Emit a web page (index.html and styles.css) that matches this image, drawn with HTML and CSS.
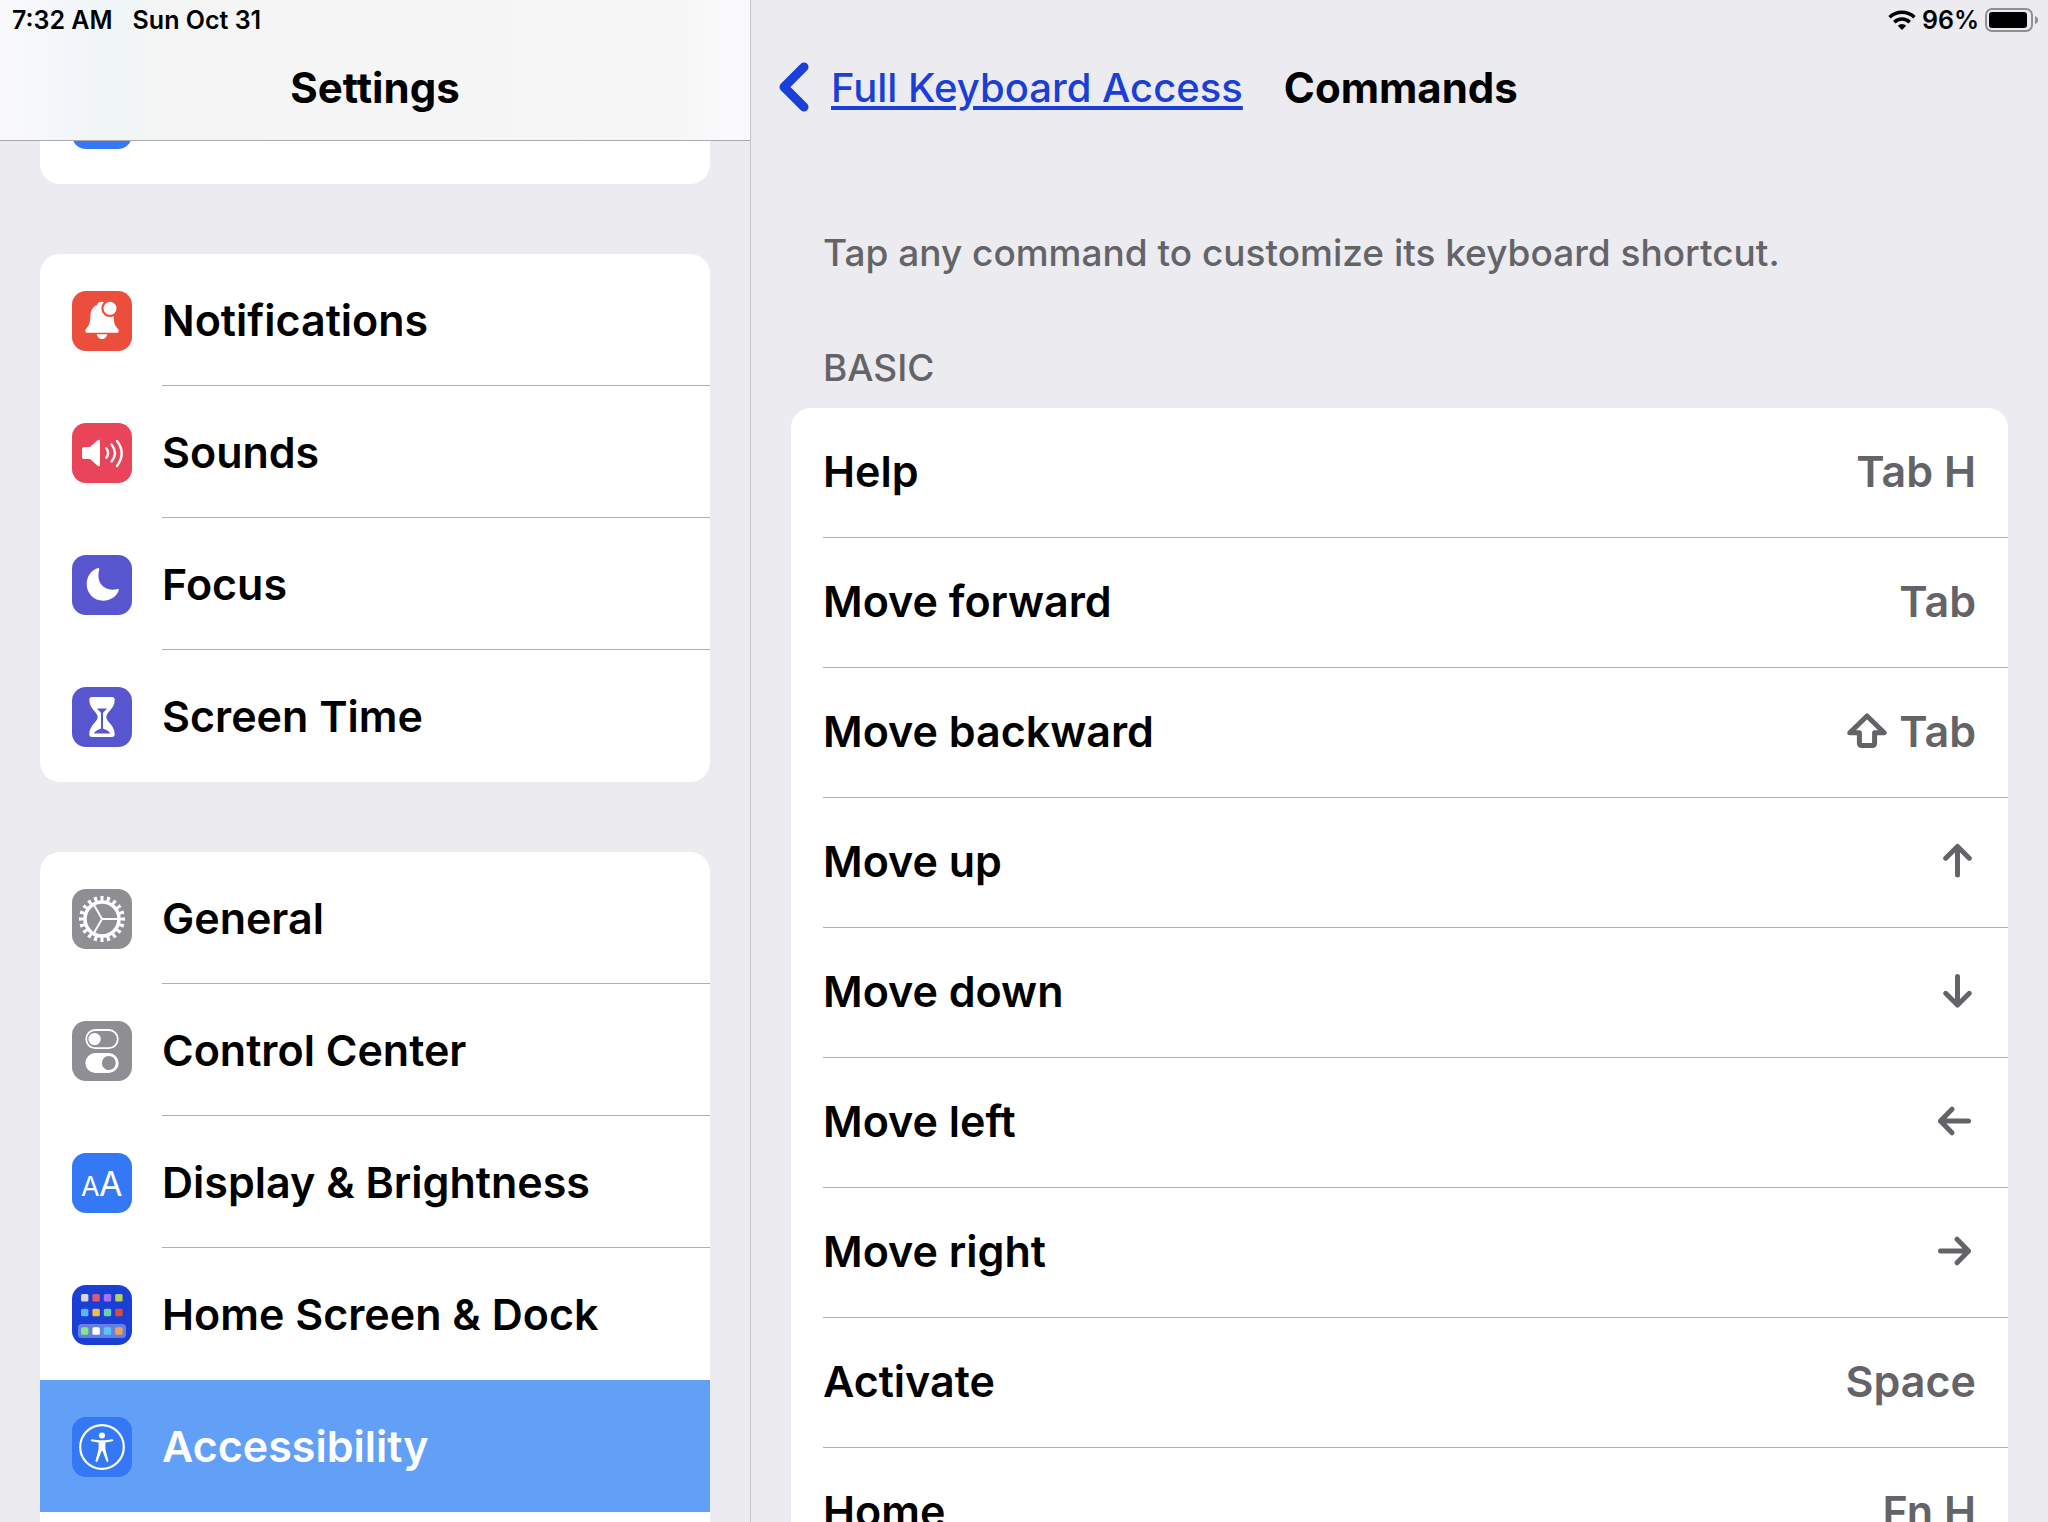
FILE: index.html
```html
<!DOCTYPE html>
<html lang="en">
<head>
  <meta charset="UTF-8">
  <title>Settings - Commands</title>
  <link rel="stylesheet" href="styles.css">
</head>
<body>

<aside class="sidebar">
  <header class="sidebar-header">
    <div class="status-bar">
      <span>7:32 AM</span>
      <span>Sun Oct 31</span>
    </div>
    <div class="title-bar">
      <h1>Settings</h1>
    </div>
  </header>

  <nav class="sidebar-nav">
    <div class="card">
      <div class="nav-row">
        <span class="app-icon blue"></span>
      </div>
    </div>

    <div class="card">
      <a class="nav-row" href="#notifications">
        <svg class="app-icon red" viewBox="0 0 60 60" aria-hidden="true">
          <path fill="#fff" d="M30 10.700c-3 0-4.600 1.600-5.200 3.300C20.500 16 18.600 20 18.400 25c-.2 6-.9 9-3.400 11.800-1.300 1.500-1.800 2.400-1.800 3.200 0 1.100.8 1.800 2 1.800h29.600c1.200 0 2-.7 2-1.800 0-.8-.5-1.700-1.800-3.200C42.500 34 41.800 31 41.600 25L38 12z"/>
          <path fill="#fff" d="M24.700 43.200h10.600c-.6 3.200-2.600 4.800-5.300 4.800s-4.700-1.600-5.300-4.800z"/>
          <circle cx="38" cy="17.300" r="7.600" fill="#fff" stroke="#eb4e3d" stroke-width="2.200"/>
        </svg>
        <span class="nav-label">Notifications</span>
      </a>
      <a class="nav-row" href="#sounds">
        <svg class="app-icon pink" viewBox="0 0 60 60" aria-hidden="true">
          <path fill="#fff" d="M12 24h6l7.600-6.800c1.200-1 2.400-.6 2.400.8v24c0 1.400-1.200 1.800-2.400.8L18 36h-6c-1.300 0-2-.7-2-2v-8c0-1.300.7-2 2-2z"/>
          <path fill="none" stroke="#fff" stroke-width="2.400" stroke-linecap="round" d="M34.300 25.200q3.600 4.800 0 9.600M39.600 21.500q6.800 8.500 0 17M45 18q9.400 12 0 25"/>
        </svg>
        <span class="nav-label">Sounds</span>
      </a>
      <a class="nav-row" href="#focus">
        <svg class="app-icon purple" viewBox="0 0 60 60" aria-hidden="true">
          <path fill="#fff" d="M26.200 13C18.500 15.500 14.700 22 14.700 29.300c0 9.400 7.300 16.400 16.500 16.400 7 0 13.300-4 15.500-10.200.4-1-.2-1.700-1.200-1.400C33 37 23.500 28.500 27.300 14.600c.3-1-.2-1.900-1.100-1.600z"/>
        </svg>
        <span class="nav-label">Focus</span>
      </a>
      <a class="nav-row last" href="#screen-time">
        <svg class="app-icon purple" viewBox="0 0 60 60" aria-hidden="true">
          <path fill="#fff" d="M20 10h20c1.800 0 2.700 1 2.700 2.700C42.700 22 34.300 25 34.300 30s8.400 8 8.400 17.300c0 1.700-.9 2.700-2.700 2.700H20c-1.800 0-2.700-1-2.700-2.700C17.300 38 25.700 35 25.700 30S17.300 22 17.300 12.700C17.300 11 18.200 10 20 10z"/>
          <path fill="#5856ce" d="M25 21.500h10c-1.200 2-3 2.500-4 4.500v15.500c1 1 6 1.500 7 5H22c1-3.500 6-4 7-5V26c-1-2-2.800-2.500-4-4.500z"/>
        </svg>
        <span class="nav-label">Screen Time</span>
      </a>
    </div>

    <div class="card">
      <a class="nav-row" href="#general">
        <svg class="app-icon gray" viewBox="0 0 60 60" aria-hidden="true">
          <g fill="none" stroke="#fff">
            <circle cx="30" cy="30" r="17" stroke-width="3.600"/>
            <circle cx="30" cy="30" r="20.500" stroke-width="5" pathLength="200" stroke-dasharray="4.800 5.200" stroke-dashoffset="2.400"/>
            <path stroke-width="2" d="M30 30h16M30 30l-8-13.900M30 30l-8 13.900"/>
          </g>
        </svg>
        <span class="nav-label">General</span>
      </a>
      <a class="nav-row" href="#control-center">
        <svg class="app-icon gray" viewBox="0 0 60 60" aria-hidden="true">
          <rect x="14.200" y="9" width="31.600" height="18.200" rx="9.100" fill="none" stroke="#fff" stroke-width="1.800"/>
          <circle cx="22.600" cy="18.100" r="6.200" fill="#fff"/>
          <rect x="13.300" y="32" width="33.400" height="20" rx="10" fill="#fff"/>
          <circle cx="36.800" cy="42" r="6.900" fill="#8e8e93"/>
        </svg>
        <span class="nav-label">Control Center</span>
      </a>
      <a class="nav-row" href="#display">
        <svg class="app-icon blue" viewBox="0 0 60 60" aria-hidden="true">
          <text class="icon-letter" x="9" y="43" font-size="27">A</text>
          <text class="icon-letter" x="27" y="43" font-size="34">A</text>
        </svg>
        <span class="nav-label">Display &amp; Brightness</span>
      </a>
      <a class="nav-row last" href="#home-screen">
        <svg class="app-icon navy" viewBox="0 0 60 60" aria-hidden="true">
          <rect x="6" y="39" width="48" height="14" rx="3.500" fill="#6680e0"/>
          <rect x="9" y="9" width="7.400" height="7.400" rx="1.500" fill="#d6d6dc"/>
          <rect x="20.400" y="9" width="7.400" height="7.400" rx="1.500" fill="#e25a70"/>
          <rect x="31.800" y="9" width="7.400" height="7.400" rx="1.500" fill="#a672f5"/>
          <rect x="43.200" y="9" width="7.400" height="7.400" rx="1.500" fill="#b5d15c"/>
          <rect x="9" y="23.800" width="7.400" height="7.400" rx="1.500" fill="#5ab4f8"/>
          <rect x="20.400" y="23.800" width="7.400" height="7.400" rx="1.500" fill="#f2bd48"/>
          <rect x="31.800" y="23.800" width="7.400" height="7.400" rx="1.500" fill="#6dcfab"/>
          <rect x="43.200" y="23.800" width="7.400" height="7.400" rx="1.500" fill="#e2483c"/>
          <rect x="9" y="42.300" width="7.400" height="7.400" rx="1.500" fill="#82e882"/>
          <rect x="20.400" y="42.300" width="7.400" height="7.400" rx="1.500" fill="#fff"/>
          <rect x="31.800" y="42.300" width="7.400" height="7.400" rx="1.500" fill="#5cc3f7"/>
          <rect x="43.200" y="42.300" width="7.400" height="7.400" rx="1.500" fill="#efa15c"/>
        </svg>
        <span class="nav-label">Home Screen &amp; Dock</span>
      </a>
      <a class="nav-row last selected" href="#accessibility" aria-current="page">
        <svg class="app-icon blue" viewBox="0 0 60 60" aria-hidden="true">
          <circle cx="30" cy="30" r="21.800" fill="none" stroke="#fff" stroke-width="2.200"/>
          <circle cx="30" cy="18.400" r="3" fill="#fff"/>
          <path fill="#fff" d="M20 22.200c3 .6 6.500 1 10 1s7-.4 10-1c1.400-.2 1.700 1.700.4 2-2.400.6-4.800 1-7 1.300v6.800l3 11.200c.3 1.500-1.400 2-2 .7L30.500 34h-1l-3.900 10.200c-.6 1.300-2.300.8-2-.7l3-11.200v-6.800c-2.200-.3-4.600-.7-7-1.300-1.300-.3-1-2.200.4-2z"/>
        </svg>
        <span class="nav-label">Accessibility</span>
      </a>
      <div class="nav-row"></div>
    </div>
  </nav>
</aside>

<main class="detail">
  <header class="detail-header">
    <div class="status-bar status-right">
      <svg class="wifi" viewBox="0 0 28 20" aria-hidden="true">
        <g fill="none" stroke="#000" stroke-width="3.400">
          <path d="M1.500 7.300a18 18 0 0 1 25 0"/>
          <path d="M6.300 12.200a11 11 0 0 1 15.400 0"/>
        </g>
        <path d="M14 20l-4.200-4.300a6 6 0 0 1 8.400 0z"/>
      </svg>
      <span>96%</span>
      <svg class="battery" viewBox="0 0 54 24" aria-hidden="true">
        <rect x="1" y="1" width="46" height="22" rx="6" fill="none" stroke="#8e8e93" stroke-width="2"/>
        <rect x="4" y="4" width="38" height="16" rx="3" fill="#000"/>
        <path d="M50 8q3 1 3 4t-3 4z" fill="#8e8e93"/>
      </svg>
    </div>
    <div class="title-bar">
      <a class="back" href="#full-keyboard-access">
        <svg class="chevron" viewBox="0 0 32 50" aria-hidden="true">
          <path fill="none" stroke="#1a3fd6" stroke-width="9" stroke-linecap="round" stroke-linejoin="round" d="M26 5L6 25l20 20"/>
        </svg>
        <span class="back-text">Full Keyboard Access</span>
      </a>
      <h2>Commands</h2>
    </div>
  </header>

  <div class="content">
    <p class="hint">Tap any command to customize its keyboard shortcut.</p>
    <h3 class="section-title">BASIC</h3>

    <div class="card commands">
      <button class="command"><span class="inner">Help <span class="keys">Tab H</span></span></button>
      <button class="command"><span class="inner">Move forward <span class="keys">Tab</span></span></button>
      <button class="command">
        <span class="inner">Move backward
          <span class="keys">
            <svg class="key-icon" viewBox="0 0 40 36" role="img" aria-label="Shift"><path d="M20 3l17.200 16.800H27.600V30q0 2.500-2.500 2.500H14.900q-2.500 0-2.500-2.500V19.800H2.800z"/></svg>
            Tab
          </span>
        </span>
      </button>
      <button class="command">
        <span class="inner">Move up
          <span class="keys"><svg class="key-icon" viewBox="0 0 40 36" role="img" aria-label="Up arrow"><path d="M21.500 32V3.500M9.700 15.200L21.500 3.500l11.800 11.700"/></svg></span>
        </span>
      </button>
      <button class="command">
        <span class="inner">Move down
          <span class="keys"><svg class="key-icon" viewBox="0 0 40 36" role="img" aria-label="Down arrow"><path d="M21.500 3.500V32M9.700 20.300L21.500 32l11.800-11.700"/></svg></span>
        </span>
      </button>
      <button class="command">
        <span class="inner">Move left
          <span class="keys"><svg class="key-icon" viewBox="0 0 40 36" role="img" aria-label="Left arrow"><path d="M32.500 18H4.500M16 6.200L4.500 18 16 29.800"/></svg></span>
        </span>
      </button>
      <button class="command">
        <span class="inner">Move right
          <span class="keys"><svg class="key-icon" viewBox="0 0 40 36" role="img" aria-label="Right arrow"><path d="M4.500 18h28M21 6.200L32.500 18 21 29.800"/></svg></span>
        </span>
      </button>
      <button class="command"><span class="inner">Activate <span class="keys">Space</span></span></button>
      <button class="command"><span class="inner">Home <span class="keys">Fn H</span></span></button>
    </div>
  </div>
</main>

</body>
</html>
```

FILE: styles.css
```css
* {
  box-sizing: border-box;
}
body {
  display: flex;
  height: 100vh;
  margin: 0;
  overflow: hidden;
  font-family: Inter, "Liberation Sans", sans-serif;
  font-size: 43px;
  font-weight: 600;
  color: #000;
  background-color: #ebebf0;
}
h1, h2, h3, p {
  margin: 0;
}
a {
  color: inherit;
  text-decoration: none;
}
.sidebar {
  position: relative;
  flex: 0 0 751px;
  overflow: hidden;
  border-right: 1px solid #c4c4c8;
}
/* sits over the scrolled list */
.sidebar-header {
  position: absolute;
  top: 0;
  left: 0;
  right: 0;
  z-index: 1;
  border-bottom: 1px solid #a9a9ae;
  background: linear-gradient(90deg, #fafafd 0%, #f2f5f9 10%, #f0f5f7 16%, #f5f5f5 22%, #f6f6f6 90%, #fafafc 96%);
}
.status-bar {
  display: flex;
  align-items: center;
  gap: 20px;
  height: 34px;
  padding: 6px 9px 0 12px;
  font-size: 25px;
}
.status-right {
  justify-content: flex-end;
  gap: 6px;
}
.wifi {
  width: 28px;
  height: 20px;
}
.battery {
  width: 54px;
  height: 24px;
}
.title-bar {
  display: flex;
  align-items: center;
  height: 106px;
}
.sidebar-header .title-bar {
  justify-content: center;
}
h1, h2 {
  font-size: 42px;
  font-weight: 700;
}
.sidebar-nav {
  display: flex;
  flex-direction: column;
  gap: 70px;
  padding: 52px 40px 0;
}
.card {
  overflow: hidden;
  border-radius: 20px;
  background-color: white;
}
.nav-row {
  display: flex;
  align-items: center;
  gap: 30px;
  height: 132px;
  padding: 2px 0 0 32px;
}
.nav-label {
  flex: 1;
  line-height: 129px;
  border-bottom: 1px solid #b0b0b3;
}
.last .nav-label {
  border-bottom-color: transparent;
}
.selected {
  color: white;
  background-color: #629ff7;
}
.app-icon {
  flex: none;
  width: 60px;
  height: 60px;
  border-radius: 14px;
}
.red { background-color: #eb4e3d; }
.pink { background-color: #ea445a; }
.purple { background-color: #5856ce; }
.gray { background-color: #8e8e93; }
.blue { background-color: #3478f6; }
.navy { background-color: #1a3fd6; }
.icon-letter {
  fill: white;
  font-weight: 400;
}
.detail {
  flex: 1;
  min-width: 0;
}
.detail-header .title-bar {
  gap: 41px;
  padding-left: 27px;
}
.back {
  display: flex;
  align-items: center;
  gap: 21px;
  font-size: 40px;
  font-weight: 500;
  color: #1a3fd6;
}
.chevron {
  width: 32px;
  height: 50px;
}
.back-text {
  text-decoration: underline;
  text-decoration-thickness: 4px;
  text-underline-offset: 4px;
}
.content {
  padding: 90px 40px 0;
}
.hint, .section-title {
  padding-left: 32px;
  font-size: 37px;
  font-weight: 500;
  line-height: 46px;
  color: #636368;
}
.section-title {
  margin: 69px 0 17px;
}
.command {
  display: block;
  width: 100%;
  padding: 0 0 0 32px;
  border: none;
  background: none;
  font: inherit;
  color: inherit;
  text-align: left;
  cursor: pointer;
}
.inner {
  display: flex;
  align-items: center;
  justify-content: space-between;
  height: 130px;
  padding: 0 32px 4px 0;
  border-bottom: 1px solid #b0b0b3;
}
.keys {
  display: flex;
  align-items: center;
  gap: 12px;
  color: #636368;
}
.key-icon {
  width: 40px;
  height: 36px;
  fill: none;
  stroke: #636368;
  stroke-width: 5px;
  stroke-linecap: round;
  stroke-linejoin: round;
}
```
